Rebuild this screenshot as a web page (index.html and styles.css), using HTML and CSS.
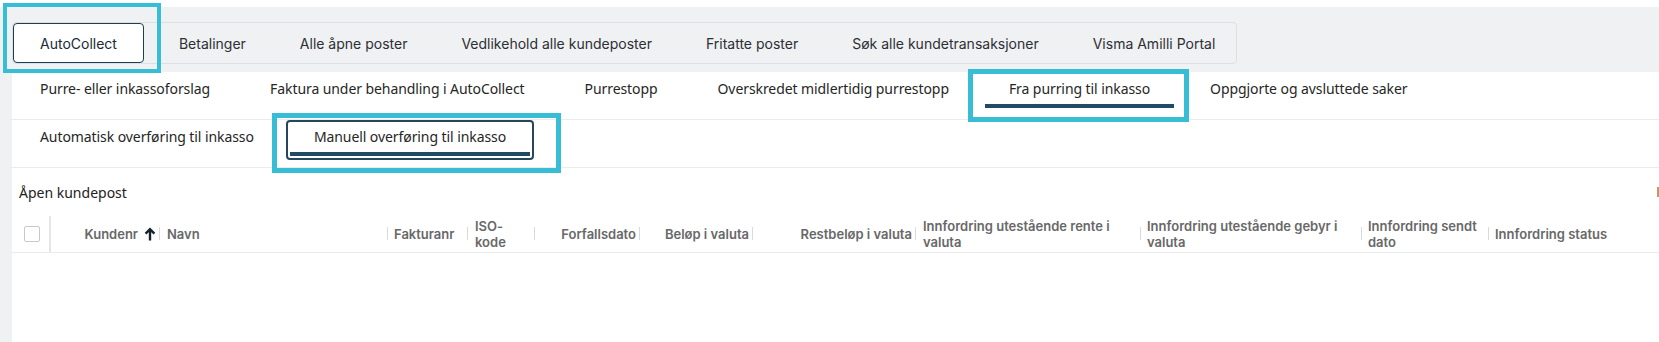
FILE: index.html
```html
<!DOCTYPE html>
<html lang="no">
<head>
<meta charset="utf-8">
<title>AutoCollect</title>
<link rel="stylesheet" href="styles.css">
</head>
<body>
<div class="page">
  <header class="topband">
    <nav class="maintabs">
      <div class="maintab active">AutoCollect</div>
      <div class="maintab">Betalinger</div>
      <div class="maintab">Alle åpne poster</div>
      <div class="maintab">Vedlikehold alle kundeposter</div>
      <div class="maintab">Fritatte poster</div>
      <div class="maintab">Søk alle kundetransaksjoner</div>
      <div class="maintab">Visma Amilli Portal</div>
    </nav>
  </header>
  <div class="body">
    <main class="panel">
      <div class="subtabs">
        <div class="subtab">Purre- eller inkassoforslag</div>
        <div class="subtab">Faktura under behandling i AutoCollect</div>
        <div class="subtab">Purrestopp</div>
        <div class="subtab">Overskredet midlertidig purrestopp</div>
        <div class="subtab selected">Fra purring til inkasso</div>
        <div class="subtab">Oppgjorte og avsluttede saker</div>
      </div>
      <div class="subtabs">
        <div class="subtab">Automatisk overføring til inkasso</div>
        <div class="subtab selected focused">Manuell overføring til inkasso</div>
      </div>
      <div class="caption">
        <span>Åpen kundepost</span>
        <span class="edge-mark"></span>
      </div>
      <div class="thead">
        <div class="th th-check"><span class="checkbox"></span></div>
        <div class="th right c-kundenr">Kundenr
          <svg class="sort" width="12" height="14" viewBox="0 0 12 14"><path d="M6 13.5V2.2M1.6 6.6L6 2.2l4.4 4.4" fill="none" stroke="#15212c" stroke-width="2.4"/></svg>
        </div>
        <div class="th c-navn">Navn</div>
        <div class="th c-faktura">Fakturanr</div>
        <div class="th c-iso">ISO-kode</div>
        <div class="th right c-forfall">Forfallsdato</div>
        <div class="th right c-belop">Beløp i valuta</div>
        <div class="th right c-rest">Restbeløp i valuta</div>
        <div class="th c-rente">Innfordring utestående rente i valuta</div>
        <div class="th c-gebyr">Innfordring utestående gebyr i valuta</div>
        <div class="th c-sendt">Innfordring sendt dato</div>
        <div class="th c-status last">Innfordring status</div>
      </div>
    </main>
  </div>
  <div class="annot a1"></div>
  <div class="annot a2"></div>
  <div class="annot a3"></div>
</div>
</body>
</html>
```

FILE: styles.css
```css
* { box-sizing: border-box; }
html, body { margin: 0; padding: 0; background: #ffffff; }
body {
  width: 1659px;
  height: 342px;
  overflow: hidden;
  font-family: "Noto Sans", "Open Sans", sans-serif;
  color: #252525;
}
.page {
  position: relative;
  height: 342px;
  padding-top: 7px;
}

/* top band with main tabs */
.topband {
  height: 65px;
  background: #f0f1f3;
  padding: 15px 0 0 12px;
}
.maintabs {
  display: flex;
  align-items: stretch;
  width: 1225px;
  height: 42px;
  border: 1px solid #dcdfe3;
  border-radius: 4px;
}
.maintab {
  display: flex;
  align-items: center;
  padding: 0 27px;
  font-family: Inter, "Noto Sans", sans-serif;
  font-size: 14px;
  color: #2c2f33;
  white-space: nowrap;
}
.maintab.active {
  height: 40px;
  padding: 0 26px;
  background: #ffffff;
  border: 1px solid #1d3f55;
  border-radius: 4px;
  color: #1a2a36;
  margin-right: 8px;
}

/* body */
.body {
  display: flex;
  height: 270px;
  background: #f0f1f3;
  padding-left: 12px;
}
.panel {
  flex: 1;
  background: #ffffff;
  display: flex;
  flex-direction: column;
}

.subtabs {
  display: flex;
  height: 48px;
  border-bottom: 1px solid #ececec;
  margin-left: -2px;
}
.subtab {
  position: relative;
  height: 40px;
  padding: 7px 30px 0;
  line-height: 20px;
  font-size: 14px;
  letter-spacing: -0.08px;
  color: #262626;
  white-space: nowrap;
}
.subtab.selected::after {
  content: "";
  position: absolute;
  left: 6px;
  right: 6px;
  top: 32px;
  height: 4px;
  background: #1f4c64;
}
.subtab.focused::before {
  content: "";
  position: absolute;
  left: 2px;
  right: 2px;
  top: 0;
  bottom: 0;
  border: 2px solid #24475c;
  border-radius: 4px;
}

.caption {
  display: flex;
  align-items: center;
  height: 48px;
  padding-left: 7px;
  font-size: 14px;
  color: #222222;
}
.edge-mark {
  margin-left: auto;
  width: 2px;
  height: 10px;
  background: #c99466;
}

/* table header */
.thead {
  display: flex;
  height: 37px;
  border-bottom: 1px solid #ebebeb;
}
.th {
  position: relative;
  display: flex;
  align-items: center;
  padding: 0 6px 0 7px;
  font-family: Inter, "Noto Sans", sans-serif;
  font-size: 13px;
  font-weight: 600;
  line-height: 16px;
  color: #686868;
}
.th::after {
  content: "";
  position: absolute;
  right: 0;
  top: 11px;
  bottom: 12px;
  width: 1px;
  background: #dadada;
}
.th.last::after, .th.th-check::after { display: none; }
.th.right { justify-content: flex-end; padding: 0 4px 0 4px; text-align: right; }
.th-check {
  width: 39px;
  padding: 0 0 0 12px;
  border-right: 2px solid #e6e6e6;
}
.checkbox {
  display: block;
  width: 16px;
  height: 16px;
  border: 1.5px solid #c9c9c9;
  border-radius: 2px;
  background: #ffffff;
}
.sort { margin-left: 6px; flex: none; }
.c-kundenr { width: 109px; }
.c-navn { width: 228px; }
.c-faktura { width: 80px; padding-left: 6px; }
.c-iso { width: 67px; padding-right: 8px; }
.c-forfall { width: 105px; }
.c-belop { width: 113px; }
.c-rest { width: 163px; }
.c-rente { width: 225px; padding-right: 4px; }
.c-gebyr { width: 221px; padding-left: 6px; padding-right: 4px; }
.c-sendt { width: 127px; padding-left: 6px; padding-right: 2px; }
.c-status { flex: 1; padding-left: 6px; }

/* annotation overlays */
.annot {
  position: absolute;
  border: 5px solid #38bdd7;
}
.a1 { left: 3px; top: 3px; width: 158px; height: 70px; border-width: 4px; }
.a2 { left: 968px; top: 69px; width: 221px; height: 53px; }
.a3 { left: 272px; top: 113px; width: 289px; height: 60px; }
```
